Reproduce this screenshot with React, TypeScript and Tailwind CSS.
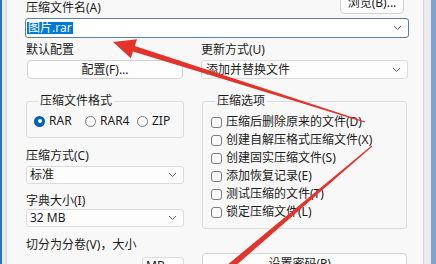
import React from "react";

const Chevron = () => (
  <svg width="9" height="6" viewBox="0 0 9 6" className="shrink-0">
    <path d="M1 1l3.5 3.5L8 1" fill="none" stroke="#5f5f5f" strokeWidth="1" />
  </svg>
);

const Check = ({ label }: { label: string }) => (
  <div className="flex items-center gap-[4px] h-[18px] leading-[16px] shrink-0">
    <div className="w-[11px] h-[11px] border border-[#7c7c7c] rounded-[3px] bg-[#fbfbfb] shrink-0" />
    <span>{label}</span>
  </div>
);

const Radio = ({ label, on, w }: { label: string; on?: boolean; w: string }) => (
  <div className={`flex items-center gap-[4px] ${w}`}>
    {on ? (
      <div className="w-[11px] h-[11px] rounded-full bg-[#005fb8] flex items-center justify-center shrink-0">
        <div className="w-[4px] h-[4px] rounded-full bg-white" />
      </div>
    ) : (
      <div className="w-[11px] h-[11px] rounded-full border border-[#7c7c7c] bg-[#fbfbfb] shrink-0" />
    )}
    <span>{label}</span>
  </div>
);

export default function App() {
  return (
    <div className="relative w-[436px] h-[264px] overflow-hidden flex bg-[#f0f0f0] text-[12px] text-[#1b1b1b] font-['Noto_Sans','Noto_Sans_CJK_SC',sans-serif]">
      <div className="w-[2px] bg-[#2f6fc0] shrink-0" />
      <div className="w-[5px] bg-[#e9e9e9] border-r border-[#d6d6d6] shrink-0" />
      <div className="flex-1 min-w-0 bg-[#f8f8f8] pl-[18px] pr-[14px] flex flex-col">
        <div className="h-[28px] -mt-[10px] flex justify-between shrink-0">
          <div className="pt-[10px] pl-[1px] leading-[16px]">压缩文件名(A)</div>
          <div className="w-[64px] h-[24px] mr-[5px] border border-[#d2d2d2] rounded-[4px] bg-[#fdfdfd] flex items-end justify-center pb-[3px] leading-[14px]">
            浏览(B)...
          </div>
        </div>
        <div className="h-[20px] shrink-0 border border-[#5d7f9e] rounded-[3px] bg-white flex items-center justify-between pr-[6px]">
          <span className="bg-[#0078d7] text-white leading-[12px] px-[1px] ml-[1px]">图片.rar</span>
          <Chevron />
        </div>
        <div className="grid grid-cols-[159px_207px] gap-x-[17px] shrink-0">
          <div className="flex flex-col pl-[1px]">
            <div className="mt-[4px] leading-[16px] h-[16px]">默认配置</div>
            <div className="mt-[2px] h-[19px] ml-[1px] mr-[1px] border border-[#d2d2d2] rounded-[4px] bg-[#fdfdfd] flex items-center justify-center leading-[14px]">
              配置(F)...
            </div>
            <fieldset className="mt-[14px] border border-[#dcdcdc] rounded-[3px] pl-[7px] pb-[8px]">
              <legend className="ml-[4px] px-[2px] leading-[16px]">压缩文件格式</legend>
              <div className="mt-[4px] h-[16px] flex items-center leading-[16px]">
                <Radio label="RAR" on w="w-[51px]" />
                <Radio label="RAR4" w="w-[52px]" />
                <Radio label="ZIP" w="w-[40px]" />
              </div>
            </fieldset>
            <div className="mt-[10px] leading-[16px] h-[16px]">压缩方式(C)</div>
            <div className="mt-[2px] h-[18px] border border-[#dcdcdc] rounded-[3px] bg-[#fdfdfd] flex items-center justify-between pl-[3px] pr-[6px] leading-[14px]">
              <span>标准</span>
              <Chevron />
            </div>
            <div className="mt-[9px] leading-[16px] h-[16px]">字典大小(I)</div>
            <div className="h-[18px] border border-[#dcdcdc] rounded-[3px] bg-[#fdfdfd] flex items-center justify-between pl-[3px] pr-[6px] leading-[14px]">
              <span>32 MB</span>
              <Chevron />
            </div>
            <div className="mt-[10px] leading-[16px] h-[16px]">切分为分卷(V)，大小</div>
            <div className="mt-[4px] flex justify-end">
              <div className="w-[42px] h-[18px] border border-[#dcdcdc] rounded-[3px] bg-[#fdfdfd] flex items-center justify-between pl-[3px] pr-[5px] leading-[14px]">
                <span>MB</span>
                <Chevron />
              </div>
            </div>
          </div>
          <div className="flex flex-col">
            <div className="mt-[4px] leading-[16px] h-[16px]">更新方式(U)</div>
            <div className="mt-[2px] h-[19px] border border-[#dcdcdc] rounded-[3px] bg-[#fdfdfd] flex items-center justify-between pl-[4px] pr-[6px] leading-[14px]">
              <span>添加并替换文件</span>
              <Chevron />
            </div>
            <fieldset className="mt-[14px] ml-[1px] mr-[1px] border border-[#dcdcdc] rounded-[3px] pl-[8px] pb-[7px]">
              <legend className="ml-[4px] px-[2px] leading-[16px]">压缩选项</legend>
              <div className="mt-[4px] flex flex-col">
                <Check label="压缩后删除原来的文件(D)" />
                <Check label="创建自解压格式压缩文件(X)" />
                <Check label="创建固实压缩文件(S)" />
                <Check label="添加恢复记录(E)" />
                <Check label="测试压缩的文件(T)" />
                <Check label="锁定压缩文件(L)" />
              </div>
            </fieldset>
            <div className="mt-[24px] ml-[1px] mr-[1px] h-[22px] border border-[#d2d2d2] rounded-[4px] bg-[#fdfdfd] flex items-center justify-center leading-[14px]">
              设置密码(P)...
            </div>
          </div>
        </div>
      </div>
      <div className="w-[8px] bg-[#ebebeb] border-l border-[#d4d4d4] shrink-0" />
      <div className="w-[5px] bg-[#7fa3d0] shrink-0" />
      <svg className="absolute inset-0 pointer-events-none" width="436" height="264" viewBox="0 0 436 264">
        <polygon
          points="113,42 137,39.2 134.8,45.9 365.15,121.5 364.85,122.5 133,51.6 130.8,58.3"
          fill="#e3342c"
        />
        <polygon points="372.3,146.4 202.3,294.7 197.7,289.3 371.7,145.6" fill="#e3342c" />
      </svg>
    </div>
  );
}
